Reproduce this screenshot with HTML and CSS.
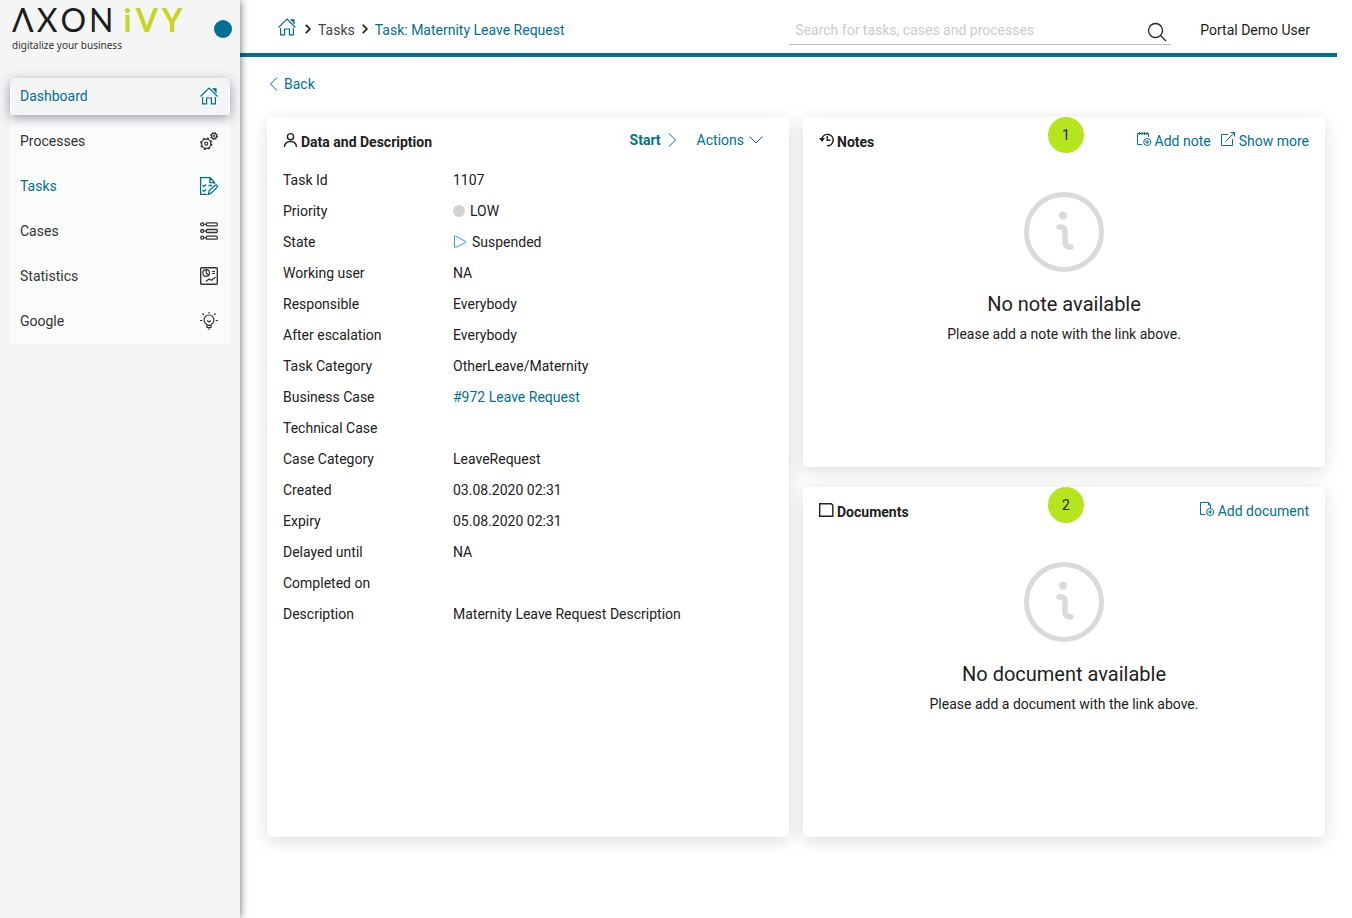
FILE: index.html
```html
<!DOCTYPE html>
<html lang="en">
<head>
<meta charset="utf-8">
<meta name="viewport" content="width=device-width, initial-scale=1">
<title>Task: Maternity Leave Request</title>
<link rel="stylesheet" href="styles.css">
</head>
<body>
<svg class="symbols" aria-hidden="true">
  <symbol id="home" viewBox="0 0 18 18"><path stroke-width="1.200" d="M.5 9.500 9 1l8.500 8.500M12.500 1.800H16V6M2.600 10v6.900h4V11h4.800v5.900h4V10"/><path d="M12.500 1.800H16V5.500z" fill="currentColor" stroke="none"/></symbol>
  <symbol id="info" viewBox="0 0 80 80"><circle cx="40" cy="40" r="37.500" stroke-width="5"/><circle cx="39" cy="23.500" r="4" fill="currentColor" stroke="none"/><path d="M35 35h2q4 0 4 4v10q0 6 6 6" stroke-width="5.500" stroke-linecap="round"/></symbol>
</svg>
<div class="app">
  <aside class="sidebar">
    <div class="brand">
      <div class="logo">
        <div class="logo-name"><span>Λ</span><span>X</span><span>O</span><span>N</span><span class="logo-accent"><b>i</b><b>V</b><b>Y</b></span></div>
        <div class="tagline">digitalize your business</div>
      </div>
      <button class="pin" type="button" aria-label="Pin menu"></button>
    </div>
    <nav class="menu">
      <a class="menu-item current" href="#">Dashboard<svg class="icon"><use href="#home"/></svg></a>
      <a class="menu-item" href="#">Processes
        <svg class="icon" viewBox="0 0 18 18"><circle cx="6.200" cy="11.700" r="4.600" stroke-width="1.200"/><circle cx="6.200" cy="11.700" r="1.500" stroke-width="1.200"/><circle cx="6.200" cy="11.700" r="5.600" stroke-width="1.300" stroke-dasharray="2.200 2.200"/><circle cx="14" cy="4" r="2.600" stroke-width="1.100"/><circle cx="14" cy="4" r=".8"/><circle cx="14" cy="4" r="3.400" stroke-width="1.200" stroke-dasharray="1.335 1.335"/></svg></a>
      <a class="menu-item active" href="#">Tasks
        <svg class="icon" viewBox="0 0 18 18"><path stroke-width="1.300" d="M14.500 7V5.500L10 .6H.6v16.800h6.500M10 .6v5h4.500M2.500 8.200 4 9.500l2.200-2M2.500 13.200 4 14.500l2.200-2M8.500 8.500H12M8.300 17.400l.8-3.600 6-5.600q1.200-.8 2 .2.800 1-.1 2l-6 5.800z"/></svg></a>
      <a class="menu-item" href="#">Cases
        <svg class="icon" viewBox="0 0 18 18"><g stroke-width="1.300"><rect x="6.200" y=".8" width="11.100" height="3" rx="1"/><rect x="6.200" y="7.500" width="11.100" height="3" rx="1"/><rect x="6.200" y="14.200" width="11.100" height="3" rx="1"/><circle cx="2.200" cy="2.300" r="1.500"/><circle cx="2.200" cy="9" r="1.500"/><circle cx="2.200" cy="15.700" r="1.500"/></g><path d="M3.800 2.300h2.400M3.800 9h2.400M3.800 15.700h2.400"/></svg></a>
      <a class="menu-item" href="#">Statistics
        <svg class="icon" viewBox="0 0 18 18"><rect x=".7" y=".7" width="16.600" height="16.600" rx="1" stroke-width="1.400"/><path stroke-width="1.200" d="M6.200 2.700V6l2.500 2.200M12 4.500h3M12 6.500h3M6 14.500l3-2.500 2.500 1.300 4-3.300"/><circle cx="6.200" cy="6" r="3.300" stroke-width="1.200"/></svg></a>
      <a class="menu-item" href="#">Google
        <svg class="icon" viewBox="0 0 18 18"><path stroke-width="1.200" d="M7 13.300q0-1-.8-1.400a4.900 4.900 0 1 1 5.600 0q-.8.400-.8 1.400zM7 13.300v2.200h4v-2.200M7.800 17h2.400M7 8.500 9 10l2-1.500M9 0v1.500M0 8.500h2.300M15.700 8.500H18M2.500 1.500l1.500 1.500M15.500 1.500 14 3"/></svg></a>
    </nav>
  </aside>
  <div class="page">
    <header class="topbar">
      <nav class="breadcrumb" aria-label="Breadcrumb">
        <a class="crumb-home" href="#" aria-label="Home"><svg class="icon"><use href="#home"/></svg></a>
        <svg class="chevron" viewBox="0 0 6 10"><path d="m.8.8 4 4.200-4 4.200" stroke-width="1.800"/></svg>
        <a class="crumb" href="#">Tasks</a>
        <svg class="chevron" viewBox="0 0 6 10"><path d="m.8.8 4 4.200-4 4.200" stroke-width="1.800"/></svg>
        <a class="link" href="#">Task: Maternity Leave Request</a>
      </nav>
      <form class="search">
        <input type="text" placeholder="Search for tasks, cases and processes" aria-label="Search for tasks, cases and processes">
        <button type="button" aria-label="Search"><svg class="icon-search" viewBox="0 0 20 20"><circle cx="8.500" cy="8.500" r="7"/><path d="m13.500 13.500 5.500 5.500"/></svg></button>
      </form>
      <button class="user" type="button">Portal Demo User</button>
    </header>
    <main class="content">
      <a class="link back" href="#"><svg class="icon-back" viewBox="0 0 8 14"><path d="M7.500.5 1 7l6.500 6.500"/></svg>Back</a>
      <div class="cards">
        <section class="card details">
          <div class="card-head">
            <h2><svg class="icon-small" viewBox="0 0 14 14"><circle cx="7.500" cy="3.700" r="3.100" stroke-width="1.400"/><path stroke-width="1.400" d="M1.500 14q.3-5.500 6-5.500t6 5.500"/></svg>Data and Description</h2>
            <div class="task-actions">
              <button class="link start" type="button">Start<svg class="icon-next" viewBox="0 0 8 14"><path d="M.5.500 7 7 .5 13.500"/></svg></button>
              <button class="link" type="button">Actions<svg class="icon-down" viewBox="0 0 14 8"><path d="M.5.500 7 7 13.500.5"/></svg></button>
            </div>
          </div>
          <dl class="fields">
            <dt>Task Id</dt><dd>1107</dd>
            <dt>Priority</dt><dd><span class="priority-dot"></span>LOW</dd>
            <dt>State</dt><dd><svg class="icon-state" viewBox="0 0 14 14"><path d="M1.500 1.500v10.500q0 1 1 .6l10-5q1-.6 0-1.200l-10-5.500q-1-.5-1 .6z"/></svg>Suspended</dd>
            <dt>Working user</dt><dd>NA</dd>
            <dt>Responsible</dt><dd>Everybody</dd>
            <dt>After escalation</dt><dd>Everybody</dd>
            <dt>Task Category</dt><dd>OtherLeave/Maternity</dd>
            <dt>Business Case</dt><dd><a class="link" href="#">#972 Leave Request</a></dd>
            <dt>Technical Case</dt><dd></dd>
            <dt>Case Category</dt><dd>LeaveRequest</dd>
            <dt>Created</dt><dd>03.08.2020 02:31</dd>
            <dt>Expiry</dt><dd>05.08.2020 02:31</dd>
            <dt>Delayed until</dt><dd>NA</dd>
            <dt>Completed on</dt><dd></dd>
            <dt>Description</dt><dd>Maternity Leave Request Description</dd>
          </dl>
        </section>
        <section class="card">
          <span class="marker">1</span>
          <div class="card-head">
            <h2><svg class="icon-small" viewBox="0 0 14 14"><path stroke-width="1.500" d="M3 5.500A5.700 5.700 0 1 1 8 12.800M8.300 3v4.200H11.500"/><path d="M0 5h6L3 9z" fill="currentColor" stroke="none"/></svg>Notes</h2>
            <div class="card-links">
              <a class="link" href="#"><svg class="icon-small" viewBox="0 0 14 14"><path d="M5 12.500H.5v-11h11V5M2.500 0v3M5 0v3M7.500 0v3M10 0v3"/><circle cx="10.200" cy="10" r="3.500"/><path d="M10.200 8v4M8.200 10h4"/></svg>Add note</a>
              <a class="link" href="#"><svg class="icon-small" viewBox="0 0 14 14"><path d="M7 2.500H.5v11h11V7M9.500.5h4v4M13.500.5l-9 9"/></svg>Show more</a>
            </div>
          </div>
          <div class="empty">
            <svg class="icon-info"><use href="#info"/></svg>
            <h3>No note available</h3>
            <p>Please add a note with the link above.</p>
          </div>
        </section>
        <section class="card">
          <span class="marker">2</span>
          <div class="card-head">
            <h2><svg class="icon-small" viewBox="0 0 14 14"><path stroke-width="1.400" d="M.7.700h11.600l1.500 1.500v11.100H.7z"/></svg>Documents</h2>
            <div class="card-links">
              <a class="link" href="#"><svg class="icon-small" viewBox="0 0 14 14"><path d="M5.500 12.500h-5V.5h8l2 2.500v3M8.500.5V3h2"/><circle cx="10.200" cy="10" r="3.500"/><path d="M10.200 8v4M8.200 10h4"/></svg>Add document</a>
            </div>
          </div>
          <div class="empty">
            <svg class="icon-info"><use href="#info"/></svg>
            <h3>No document available</h3>
            <p>Please add a document with the link above.</p>
          </div>
        </section>
      </div>
    </main>
  </div>
</div>
</body>
</html>
```
FILE: styles.css
```css
* { box-sizing: border-box; }
body {
  margin: 0;
  background: #fff;
  color: #212121;
  font: 14px/20px Roboto, "Liberation Sans", sans-serif;
}
a { color: inherit; text-decoration: none; }
button {
  border: 0;
  padding: 0;
  background: none;
  color: inherit;
  font: inherit;
  cursor: pointer;
}
svg { flex: none; fill: none; stroke: currentColor; overflow: visible; }
.symbols { position: absolute; width: 0; height: 0; }
.app { display: flex; min-height: 100vh; }

.sidebar {
  position: relative;
  flex: none;
  width: 240px;
  padding: 0 10px;
  background: #f4f6f5;
  box-shadow: 0 0 8px rgba(0, 0, 0, 0.6);
}
.brand { display: flex; justify-content: space-between; height: 78px; padding-left: 2px; }
.logo { white-space: nowrap; }
.logo-name {
  display: flex;
  gap: 3px;
  height: 38px;
  color: #1d1d1b;
  font: 32px/40px Lato, "Open Sans", sans-serif;
}
.logo-accent { display: flex; gap: 4px; margin-left: 7px; color: #c8d520; }
.logo-accent b { font-weight: 700; }
.tagline { font: 10px/14px "Noto Sans", sans-serif; color: #333; }
.pin { width: 18px; height: 18px; margin: 20px -2px 0 0; border-radius: 50%; background: #007095; }
.menu { display: flex; flex-direction: column; gap: 8px; background: #fafcfb; padding-bottom: 4px; }
.menu-item {
  display: flex;
  align-items: center;
  justify-content: space-between;
  height: 37px;
  padding: 0 12px 1px 10px;
  color: #333;
}
.menu-item.active, .menu-item.current { color: #007095; }
.menu-item.current {
  border-radius: 6px 6px 0 0;
  background: #f4f6f5;
  box-shadow: 0 3px 12px rgba(40, 40, 70, 0.45);
}
.icon { width: 18px; height: 18px; }

.page { flex: 1; min-width: 0; padding-right: 15px; }
.topbar {
  display: flex;
  align-items: center;
  height: 57px;
  padding: 7px 27px 0 38px;
  border-bottom: 4px solid #007095;
}
.breadcrumb { display: flex; align-items: center; }
.crumb-home { display: flex; margin: 0 9px 6px 0; color: #007095; }
.crumb { margin: 0 7px; color: #444; }
.chevron { width: 6px; height: 10px; margin-bottom: 2px; }
.chevron + .link { margin-left: 7px; }
.link { color: #007095; }
.search {
  display: flex;
  align-items: center;
  width: 382px;
  height: 29px;
  margin: 0 29px 0 auto;
  padding: 0 4px 0 6px;
  border-bottom: 1px solid #bbb;
}
.search input {
  flex: 1;
  min-width: 0;
  border: 0;
  padding: 0;
  outline: 0;
  background: none;
  color: #212121;
  font: inherit;
}
.search input::placeholder { color: #ccc; opacity: 1; }
.search button { display: flex; padding-top: 4px; }
.icon-search { width: 20px; height: 20px; stroke-width: 1.3; }

.content { padding: 17px 12px 20px 27px; }
.back { display: flex; width: fit-content; align-items: center; gap: 6px; padding-left: 2px; height: 20px; }
.icon-back, .icon-next { width: 9px; height: 14px; }
.icon-down { width: 14px; height: 8px; }
.cards {
  display: grid;
  grid-template-columns: 1fr 1fr;
  grid-auto-rows: minmax(350px, auto);
  gap: 20px 14px;
  margin-top: 23px;
}
.card {
  position: relative;
  padding: 14px 16px;
  border-radius: 5px;
  background: #fff;
  box-shadow: 0 4px 18px rgba(0, 0, 0, 0.14);
}
.details { grid-row: span 2; }
.card-head { display: flex; justify-content: space-between; height: 34px; }
h2 { display: flex; gap: 4px; margin: 0; padding-top: 1px; font-size: 14px; line-height: 20px; font-weight: 700; }
.icon-small { width: 14px; height: 14px; margin-top: 1px; }
.task-actions { display: flex; align-items: center; gap: 20px; height: 18px; padding-right: 10px; }
.task-actions .link { display: flex; align-items: center; gap: 5px; }
.task-actions .start { gap: 7px; }
.start { font-weight: 700; }
.card-links { display: flex; gap: 10px; }
.card-links .link { display: flex; gap: 4px; height: 20px; }
.fields { display: grid; grid-template-columns: 170px 1fr; grid-auto-rows: 31px; margin: -1px 0 0; align-items: center; }
.fields dd { display: flex; align-items: center; margin: 0; }
.priority-dot { width: 12px; height: 12px; margin-right: 5px; border-radius: 50%; background: #d2d2d2; }
.icon-state { width: 14px; height: 14px; margin-right: 5px; color: #2b97f5; }
.marker {
  position: absolute;
  top: 0;
  left: calc(50% - 16px);
  width: 36px;
  height: 36px;
  border-radius: 50%;
  background: #b5e61d;
  line-height: 36px;
  text-align: center;
}
.empty { display: flex; flex-direction: column; align-items: center; padding-top: 27px; text-align: center; }
.icon-info { width: 80px; height: 80px; color: #d9dbda; }
h3 { margin: 20px 0 8px; font-size: 20px; line-height: 24px; font-weight: 400; }
.empty p { margin: 0; }
```
